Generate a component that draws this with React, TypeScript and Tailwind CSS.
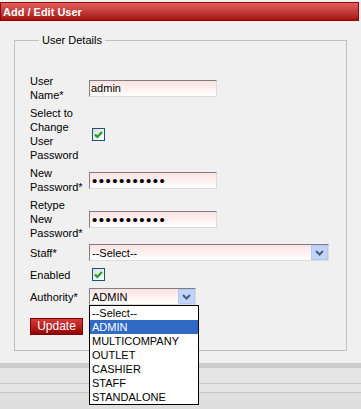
import React from "react";

function Chevron() {
  return (
    <svg width="9" height="6" viewBox="0 0 9 6">
      <polyline points="1,1 4.5,4.5 8,1" fill="none" stroke="#4a5b7c" strokeWidth="2" />
    </svg>
  );
}

function Check() {
  return (
    <span className="ml-[3px] flex h-[13px] w-[13px] items-center justify-center border border-[#1c5180] bg-linear-to-br from-[#dcdcd7] to-white">
      <svg width="11" height="11" viewBox="0 0 11 11">
        <polyline points="2,5.5 4.3,8 9,3" fill="none" stroke="#21a121" strokeWidth="2.2" />
      </svg>
    </span>
  );
}

const field =
  "h-[17px] border border-t-[#7f7f7f] border-l-[#7f7f7f] border-b-[#dcdcdc] border-r-[#dcdcdc] bg-linear-to-b from-[#fbe2e2] to-white";

function Row({ label, children }: { label: React.ReactNode; children: React.ReactNode }) {
  return (
    <div className="flex items-center py-[2px]">
      <div className="w-[55px] shrink-0">{label}</div>
      <div className="ml-[4px] flex items-center">{children}</div>
    </div>
  );
}

export default function App() {
  const authorities = ["--Select--", "ADMIN", "MULTICOMPANY", "OUTLET", "CASHIER", "STAFF", "STANDALONE"];

  return (
    <div className="flex h-[409px] w-[361px] flex-col overflow-hidden bg-[#f0f0f0] font-['Liberation_Sans',Arial,sans-serif] text-[11px] leading-[14px] text-black">
      {/* title bar */}
      <div className="h-[21px] shrink-0 pr-[2px] pt-[2px]">
        <div className="flex h-[19px] items-center border border-[#9a0000] bg-linear-to-b from-[#e25e5e] to-[#a50f0f] pl-[2px] text-[11px] font-bold text-white">
          Add / Edit User
        </div>
      </div>

      <div className="h-[342px] shrink-0 px-[14px] pt-[12px]">
        <fieldset className="h-[318px] w-[333px] border border-[#bfbfbf] pl-[15px] pt-[25px]">
          <legend className="ml-[9px] px-[3px]">User Details</legend>

          <Row label="User Name*">
            <input readOnly defaultValue="admin" className={`${field} w-[128px] px-[1px] text-[11px] outline-none`} />
          </Row>
          <Row label="Select to Change User Password">
            <Check />
          </Row>
          <Row label="New Password*">
            <input
              type="password"
              readOnly
              defaultValue="aaaaaaaaaaa"
              className={`${field} w-[128px] px-[2px] text-[15px] tracking-[1.5px] outline-none`}
            />
          </Row>
          <Row label="Retype New Password*">
            <input
              type="password"
              readOnly
              defaultValue="aaaaaaaaaaa"
              className={`${field} w-[128px] px-[2px] text-[15px] tracking-[1.5px] outline-none`}
            />
          </Row>
          <Row label="Staff*">
            <div className={`${field} flex w-[240px] items-center justify-between pl-[2px]`}>
              <span>--Select--</span>
              <span className="flex h-[15px] w-[17px] items-center justify-center border border-[#b3c7f3] bg-[#c3d4fb]">
                <Chevron />
              </span>
            </div>
          </Row>
          <div className="flex items-center py-[2px]">
            <div className="w-[55px] shrink-0">Enabled</div>
            <div className="ml-[4px] flex h-[19px] items-center">
              <Check />
            </div>
          </div>
          <Row label="Authority*">
            <div className="relative">
              <div className={`${field} flex w-[107px] items-center justify-between pl-[2px]`}>
                <span>ADMIN</span>
                <span className="flex h-[15px] w-[17px] items-center justify-center border border-[#b3c7f3] bg-[#c3d4fb]">
                  <Chevron />
                </span>
              </div>
              <ul className="absolute left-0 top-full z-10 w-[110px] border border-black bg-white">
                {authorities.map((a) => (
                  <li
                    key={a}
                    className={`h-[14px] pl-[2px] ${a === "ADMIN" ? "bg-[#316ac5] text-white" : ""}`}
                  >
                    {a}
                  </li>
                ))}
              </ul>
            </div>
          </Row>

          <div className="mt-[9px] py-[2px]">
            <button className="h-[17px] w-[53px] border border-[#7a0000] bg-linear-to-b from-[#d83a3a] to-[#950000] text-[12px] leading-[15px] text-white">
              Update
            </button>
          </div>
        </fieldset>
      </div>

      {/* footer bands */}
      <div className="h-[5px] shrink-0 bg-[#cdcdcd]" />
      <div className="h-[15px] shrink-0 bg-[#e5e5e5]" />
      <div className="h-[1px] shrink-0 bg-[#c6c6c6]" />
      <div className="h-[8px] shrink-0 bg-[#e5e5e5]" />
      <div className="h-[1px] shrink-0 bg-[#c6c6c6]" />
      <div className="h-[16px] shrink-0 bg-[#dfdfdf]" />
    </div>
  );
}
